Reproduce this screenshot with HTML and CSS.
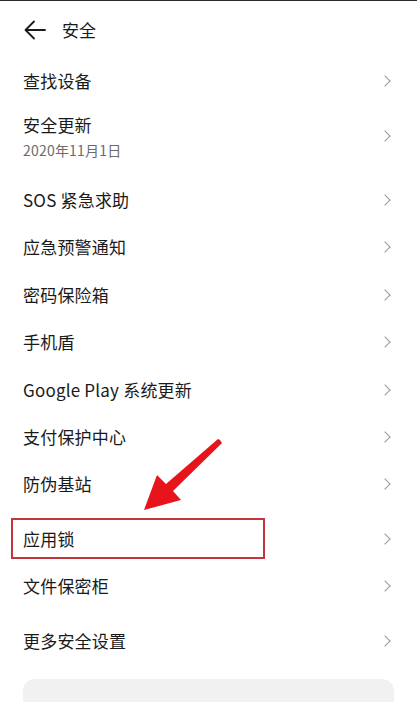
FILE: index.html
```html
<!DOCTYPE html>
<html lang="zh-CN">
<head>
  <meta charset="UTF-8" />
  <meta name="viewport" content="width=device-width, initial-scale=1.0" />
  <title>安全</title>
  <link rel="stylesheet" href="styles.css">
</head>
<body>
  <div class="page">
    <div class="topbar">
      <svg class="back" width="22" height="20" viewBox="0 0 22 20">
        <path d="M2 10 H21 M10 1.5 L1.5 10 L10 18.5" fill="none" stroke="#1a1a1a" stroke-width="1.8" stroke-linecap="round" stroke-linejoin="round"/>
      </svg>
      <h1>安全</h1>
    </div>

    <ul class="list">
      <li class="row"><span class="label">查找设备</span><i class="chev"></i></li>
      <li class="row row-two">
        <div>
          <span class="label">安全更新</span>
          <span class="sub">2020年11月1日</span>
        </div>
        <i class="chev"></i>
      </li>
      <li class="row"><span class="label">SOS 紧急求助</span><i class="chev"></i></li>
      <li class="row"><span class="label">应急预警通知</span><i class="chev"></i></li>
      <li class="row"><span class="label">密码保险箱</span><i class="chev"></i></li>
      <li class="row"><span class="label">手机盾</span><i class="chev"></i></li>
      <li class="row"><span class="label">Google Play 系统更新</span><i class="chev"></i></li>
      <li class="row"><span class="label">支付保护中心</span><i class="chev"></i></li>
      <li class="row"><span class="label">防伪基站</span><i class="chev"></i></li>
      <li class="row gap-top"><span class="label">应用锁</span><i class="chev"></i><span class="mark"></span></li>
      <li class="row"><span class="label">文件保密柜</span><i class="chev"></i></li>
      <li class="row gap-top"><span class="label">更多安全设置</span><i class="chev"></i></li>
    </ul>

    <div class="card"></div>

    <!-- red annotation arrow -->
    <svg class="pointer" width="90" height="75" viewBox="0 0 90 75">
      <path d="M79 2 L81 5 L32 53 L40 62 L3 72 L16 37 L25 46 L77 1 Z" fill="#e8141c"/>
    </svg>
  </div>
</body>
</html>
```

FILE: styles.css
```css
* { box-sizing: border-box; }
body {
  margin: 0;
  background: #fff;
  font-family: "Noto Sans CJK SC", "Noto Sans", sans-serif;
  color: #1a1a1a;
}
.page {
  position: relative;
  border-top: 1px solid #2a2a2a;
  min-height: 702px;
  overflow: hidden;
}
.topbar {
  height: 56px;
  display: flex;
  align-items: center;
  padding-left: 24px;
}
.back { margin-right: 16px; margin-top: 1px; }
.topbar h1 {
  margin: 0;
  font-size: 17px;
  font-weight: 400;
}
.list {
  list-style: none;
  margin: 0;
  padding: 0 23px;
}
.row {
  position: relative;
  height: 47.4px;
  display: flex;
  align-items: center;
  justify-content: space-between;
}
.row-two {
  height: 72px;
  padding: 8px 0 16px;
}
.row-two div { display: flex; flex-direction: column; }
.gap-top { margin-top: 7px; }
.label {
  font-size: 17px;
  line-height: 24px;
  letter-spacing: 0.2px;
}
.sub {
  margin-top: 3px;
  font-size: 14px;
  line-height: 20px;
  letter-spacing: 0.2px;
  color: #6b6b6b;
}
.chev {
  width: 8px;
  height: 8px;
  margin-right: 5px;
  border-top: 1.4px solid #9a9a9a;
  border-right: 1.4px solid #9a9a9a;
  transform: rotate(45deg);
}
.mark {
  position: absolute;
  left: -12px;
  top: 3px;
  width: 254px;
  height: 41px;
  border: 2px solid #c1363b;
}
.card {
  margin: 15px 23px 0;
  height: 60px;
  background: #f1f1f1;
  border-radius: 12px;
}
.pointer {
  position: absolute;
  left: 141px;
  top: 437px;
}
```
